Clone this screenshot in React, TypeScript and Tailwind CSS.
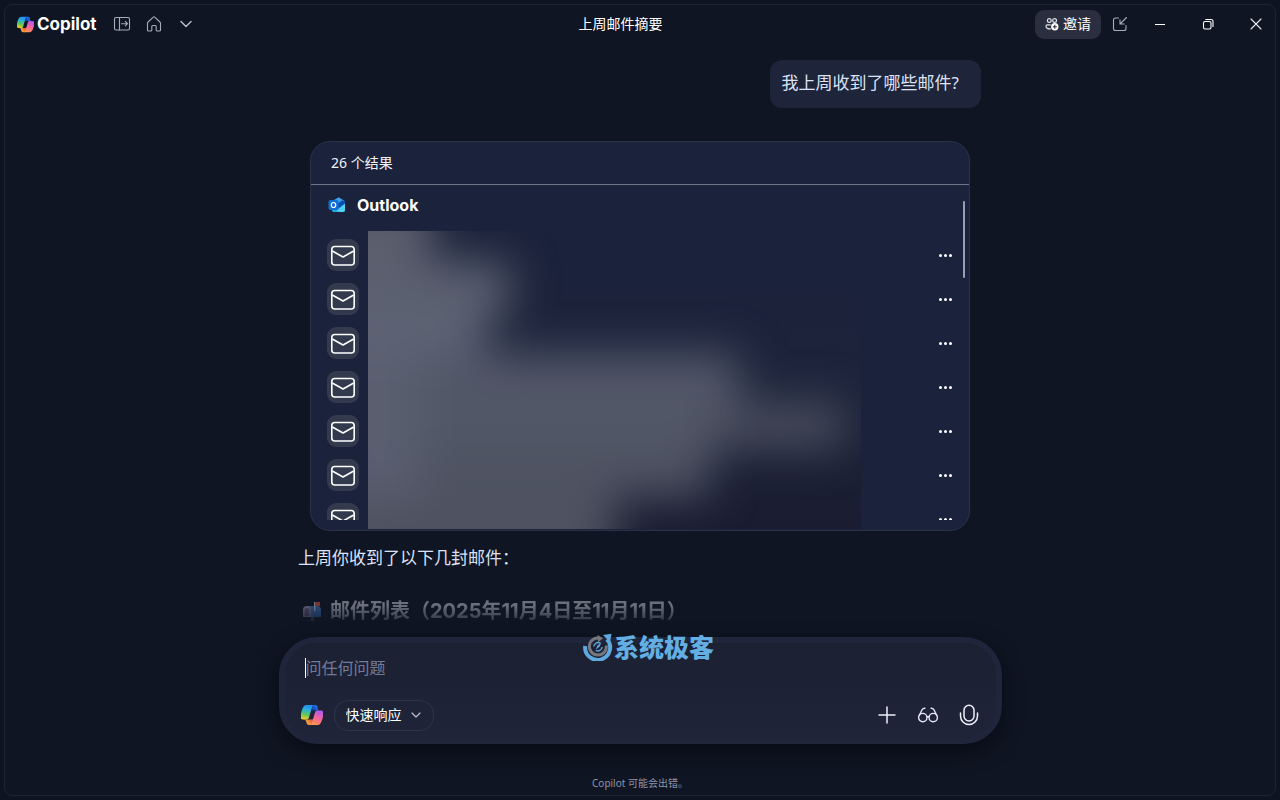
import { useId } from "react";
import type { ReactNode } from "react";

interface MailItem {
  id: number;
  label: string;
}

const MAILS: MailItem[] = Array.from({ length: 7 }, (_, i) => ({
  id: i,
  label: `邮件 ${i + 1}`,
}));

function CopilotLogo({ className }: { className: string }) {
  const id = useId();
  return (
    <svg viewBox="2 3 44 42" className={className} aria-hidden="true">
      <defs>
        <linearGradient id={`${id}a`} x1="23" y1="16" x2="34" y2="8" gradientUnits="userSpaceOnUse">
          <stop offset="0" stopColor="#12308f" />
          <stop offset="1" stopColor="#2270ec" />
        </linearGradient>
        <linearGradient id={`${id}b`} x1="14" y1="40" x2="25" y2="32" gradientUnits="userSpaceOnUse">
          <stop offset="0" stopColor="#f8a63c" />
          <stop offset="1" stopColor="#d8503c" />
        </linearGradient>
        <linearGradient id={`${id}c`} x1="17" y1="4" x2="11" y2="33" gradientUnits="userSpaceOnUse">
          <stop offset="0" stopColor="#1f8df2" />
          <stop offset="0.35" stopColor="#2fb0d8" />
          <stop offset="0.65" stopColor="#5cc45c" />
          <stop offset="1" stopColor="#f2d022" />
        </linearGradient>
        <linearGradient id={`${id}d`} x1="38" y1="15" x2="28" y2="44" gradientUnits="userSpaceOnUse">
          <stop offset="0" stopColor="#a65bee" />
          <stop offset="0.45" stopColor="#ee62a8" />
          <stop offset="0.8" stopColor="#fb7c6c" />
          <stop offset="1" stopColor="#fb9a4c" />
        </linearGradient>
      </defs>
      <path
        fill={`url(#${id}a)`}
        d="M35.142 7.325A4.63 4.63 0 0 0 30.7 4h-2.350a4.63 4.63 0 0 0-4.554 3.794L23 15.400c.8-.3 2-.4 3.500-.3h14.320h-.926a4.63 4.63 0 0 1-4.443-3.325Z"
      />
      <path
        fill={`url(#${id}b)`}
        d="M13.330 40.656A4.63 4.63 0 0 0 17.779 44h3.870a4.63 4.63 0 0 0 4.629-4.510l.1-7.500c-.8.700-2 .9-3.500.9H7.604a4.63 4.63 0 0 1 4.447 3.344Z"
      />
      <path
        fill={`url(#${id}c)`}
        transform="translate(-1 0)"
        d="M29.5 4H13.46c-4.583 0-7.332 6.057-9.165 12.113-2.172 7.176-5.014 16.775 3.208 16.775h6.925a4.63 4.63 0 0 0 4.459-3.358 2077.617 2077.617 0 0 1 4.971-17.156c.842-2.846 1.543-5.29 2.619-6.812C27.08 4.71 28.086 4 29.5 4Z"
      />
      <path
        fill={`url(#${id}d)`}
        transform="translate(1 0)"
        d="M18.498 44h16.04c4.582 0 7.332-6.058 9.165-12.115 2.171-7.177 5.013-16.775-3.208-16.775h-6.926a4.63 4.63 0 0 0-4.459 3.358 2084.96 2084.96 0 0 1-4.972 17.16c-.842 2.847-1.542 5.29-2.619 6.812-.603.853-1.61 1.56-3.021 1.56Z"
      />
    </svg>
  );
}

function OutlookLogo() {
  return (
    <svg viewBox="0 0 18 16" className="h-4 w-[18px]" aria-hidden="true">
      <path d="M4 4.500 10.500.500 17 4.500V13a2 2 0 0 1-2 2H6a2 2 0 0 1-2-2Z" fill="#1668c8" />
      <path d="M5 3.800 10 .8q.7-.4 1.400 0L16.500 4l-6 4Z" fill="#38a5ee" />
      <path d="M8 7.500 14.500 3.300 17 4.700v3L10 11Z" fill="#0c4fb0" />
      <path d="M17 6.500V13a2 2 0 0 1-2 2H6.500Z" fill="#4fd3f5" />
      <path d="M6 15a2 2 0 0 1-2-2v-1l8 3Z" fill="#2ba9ea" />
      <rect x="0.500" y="3" width="10" height="10" rx="2" fill="#126fd4" />
      <ellipse cx="5.500" cy="8" rx="2.200" ry="2.500" fill="none" stroke="#fff" strokeWidth="1.200" />
    </svg>
  );
}

function MailboxEmoji() {
  return (
    <svg viewBox="0 0 20 20" className="h-5 w-5" aria-hidden="true">
      <rect x="9" y="15" width="3" height="5" fill="#7a5a4e" />
      <path d="M5 5h10a4 4 0 0 1 4 4v7H5Z" fill="#3f7fd0" />
      <path d="M1 9a4 4 0 0 1 8 0v7H1Z" fill="#a49cc0" />
      <path d="M2.500 9.500a2.500 2.500 0 0 1 5 0V15h-5Z" fill="#6f6c8c" />
      <rect x="12" y="1" width="1.500" height="9" fill="#cdd3de" />
      <rect x="13" y="1" width="5" height="4" fill="#e0563c" />
    </svg>
  );
}

function MailIcon() {
  return (
    <svg viewBox="0 0 26 24" className="h-6 w-[26px]" fill="none" stroke="#fff" strokeWidth="1.600" strokeLinejoin="round">
      <rect x="1.800" y="3.500" width="22.400" height="18.500" rx="3" />
      <path d="M2.300 8 13 14l10.700-6" />
    </svg>
  );
}

function IconButton({ label, children }: { label: string; children: ReactNode }) {
  return (
    <button aria-label={label} className="flex h-8 w-8 shrink-0 items-center justify-center">
      {children}
    </button>
  );
}

function TitleBar() {
  return (
    <header className="grid h-[38px] shrink-0 grid-cols-[1fr_auto_1fr] items-center pl-3 pr-[3px]">
      <div className="flex items-center">
        <div className="flex w-[89px] items-center gap-[3px]">
          <CopilotLogo className="h-[17px] w-[17px]" />
          <span className="pb-px font-['Inter','Noto_Sans_CJK_SC',sans-serif] text-[17px] leading-5 font-bold text-white">
            Copilot
          </span>
        </div>
        <IconButton label="展开侧栏">
          <svg viewBox="0 0 18 16" className="h-4 w-[18px]" fill="none" stroke="#a6acb9" strokeWidth="1.100" strokeLinecap="round" strokeLinejoin="round">
            <rect x="1.500" y="1.500" width="15" height="12.500" rx="1.500" />
            <path d="M6.500 1.500V14M8.500 7.700h6M12.300 5.500l2.200 2.200-2.200 2.200" />
          </svg>
        </IconButton>
        <IconButton label="主页">
          <svg viewBox="0 0 16 16" className="h-4 w-4" fill="none" stroke="#a6acb9" strokeWidth="1.100" strokeLinejoin="round">
            <path d="M1.500 7.200c0-.5.200-.9.600-1.200L7.300 1.100a1 1 0 0 1 1.400 0L13.900 6c.4.300.6.700.6 1.200v6.800a1 1 0 0 1-1 1h-2.300a1 1 0 0 1-1-1V10.500a1 1 0 0 0-1-1H6.800a1 1 0 0 0-1 1V14a1 1 0 0 1-1 1H2.500a1 1 0 0 1-1-1Z" />
          </svg>
        </IconButton>
        <IconButton label="更多">
          <svg viewBox="0 0 12 8" className="h-2 w-3" fill="none" stroke="#b4b9c5" strokeWidth="1.500" strokeLinecap="round" strokeLinejoin="round">
            <path d="m1 1.500 5 5 5-5" />
          </svg>
        </IconButton>
      </div>

      <h1 className="mr-12 text-sm leading-5 text-white">上周邮件摘要</h1>

      <div className="flex items-center justify-end">
        <button className="mr-[3px] flex h-[29px] items-center gap-1 rounded-[9px] bg-[#2a2e3e] px-[10px] text-sm text-white">
          <svg viewBox="0 0 14 14" className="h-[14px] w-[14px]" fill="none" stroke="#dfe2ea" strokeWidth="1.200">
            <circle cx="4.300" cy="3.500" r="1.900" />
            <circle cx="9.600" cy="3.500" r="1.900" />
            <path d="M5.500 11.800C3 12.100 1 11.200 1 9.300c0-.9.500-1.400 1.300-1.400h3" strokeLinecap="round" />
            <circle cx="9.800" cy="9.800" r="3.700" fill="#fff" stroke="none" />
            <path d="M9.800 7.800v4M7.800 9.800h4" stroke="#2a2e3e" strokeWidth="1.100" />
          </svg>
          邀请
        </button>
        <IconButton label="切换到小窗口">
          <svg viewBox="0 0 16 16" className="h-4 w-4" fill="none" stroke="#a6acb9" strokeWidth="1.100" strokeLinecap="round" strokeLinejoin="round">
            <path d="M6.500 2H3.500a2 2 0 0 0-2 2v8.500a2 2 0 0 0 2 2h8.500a2 2 0 0 0 2-2V9.500M14.500 1.500 8 8M8 3.800V8h4.200" />
          </svg>
        </IconButton>
        <div className="ml-2 flex gap-4">
          <IconButton label="最小化">
            <span className="h-px w-[10px] bg-white" />
          </IconButton>
          <IconButton label="还原">
            <svg viewBox="0 0 12 12" className="h-3 w-3" fill="none" stroke="#fff" strokeWidth="1.100">
              <rect x="1.500" y="3.500" width="7.500" height="7.500" rx="1.500" />
              <path d="M3.800 1.500H9a2 2 0 0 1 2 2v5" strokeLinecap="round" />
            </svg>
          </IconButton>
          <IconButton label="关闭">
            <svg viewBox="0 0 12 12" className="h-3 w-3" fill="none" stroke="#e8eaf0" strokeWidth="1.100" strokeLinecap="round">
              <path d="m1 1 10 10M11 1 1 11" />
            </svg>
          </IconButton>
        </div>
      </div>
    </header>
  );
}

// Private subject lines, smeared out
function RedactedContent() {
  return (
    <div className="absolute top-[89px] right-[108px] bottom-px left-[57px] overflow-hidden bg-linear-to-b from-[#1b223b] via-[#1c233b] to-[#1a1d31]" aria-hidden="true">
      <div className="-mt-10 -ml-12 flex flex-col blur-[22px]">
        <div className="h-[70px] w-[112px] bg-[#5b5e6c]" />
        <div className="h-14 w-[190px] bg-[#5b6070]" />
        <div className="h-9 w-[165px] bg-[#5e6475]" />
        <div className="flex h-12">
          <div className="w-[100px] bg-[#5a5f70]" />
          <div className="w-[320px] bg-[#525768]" />
        </div>
        <div className="flex h-12">
          <div className="w-[100px] bg-[#5a5f70]" />
          <div className="w-[300px] bg-[#525767]" />
          <div className="w-[125px] bg-[#474c5b]" />
        </div>
        <div className="flex h-12">
          <div className="w-[100px] bg-[#595e70]" />
          <div className="w-[290px] bg-[#4e5362]" />
        </div>
        <div className="h-20 w-[295px] bg-[#4f5260]" />
      </div>
    </div>
  );
}

function ResultsCard() {
  return (
    <section className="relative mx-3 mt-[33px] overflow-hidden rounded-[20px] border border-[#2c3245] bg-[#1b223b] pb-[10px]">
      <div className="flex h-[43px] items-center border-b border-[#6f7688] px-5">
        <h2 className="text-sm leading-5 text-[#f0f2f8]">26 个结果</h2>
      </div>
      <div className="h-[335px] overflow-hidden">
        <div className="flex h-10 items-center gap-[11px] pl-[17px]">
          <OutlookLogo />
          <h3 className="font-['Inter','Noto_Sans_CJK_SC',sans-serif] text-base leading-6 font-bold text-white">Outlook</h3>
        </div>
        <ul className="mt-2">
          {MAILS.map((mail) => (
            <li key={mail.id} className="flex h-11 items-center justify-between pr-2 pl-4">
              <span className="flex h-8 w-8 items-center justify-center rounded-[9px] bg-[#343a4e]">
                <MailIcon />
              </span>
              <button aria-label={`${mail.label} 的更多选项`} className="flex h-8 w-8 items-center justify-center gap-[2px]">
                <span className="h-[3px] w-[3px] rounded-full bg-white" />
                <span className="h-[3px] w-[3px] rounded-full bg-white" />
                <span className="h-[3px] w-[3px] rounded-full bg-white" />
              </button>
            </li>
          ))}
        </ul>
      </div>
      <RedactedContent />
      <div className="absolute top-[59px] right-1 h-[77px] w-[2px] rounded-full bg-[#9a9faf]" />
    </section>
  );
}

function Watermark() {
  return (
    <div className="pointer-events-none absolute -top-1 left-1/2 ml-[-57px] flex items-center gap-px">
      <svg viewBox="0 0 30 28" className="h-7 w-[30px]" fill="none">
        <path d="M2.200 13a12.500 12.500 0 1 0 21.800-6.800" stroke="#5fa9de" strokeWidth="4" />
        <path d="m20 2 8.500-1.200-1.500 8.500Z" fill="#5fa9de" />
        <path d="M17.500 5.500a8.500 8.500 0 1 0 5.800 7" stroke="#77787f" strokeWidth="3" />
        <path d="m14.500 2 5.500 3.300-5 4Z" fill="#77787f" />
        <path d="M10.800 13.500a4.300 4.300 0 0 1 6.500-3.300M19.200 14a4.300 4.300 0 0 1-6.500 3.300" stroke="#5fa9de" strokeWidth="1.400" />
        <path d="m12.500 16.800 2-4.200 4-3-2 4.200Z" fill="#5fa9de" />
      </svg>
      <span className="text-[25px] leading-7 font-black text-[#63afe4]">系统极客</span>
    </div>
  );
}

function Composer() {
  return (
    <div className="relative mx-auto w-full max-w-[723px] shrink-0">
      <form className="rounded-[38px] border-[6px] border-[#1f253a] bg-linear-to-b from-[#1b2032] to-[#1f2439] pt-[13px] pr-[11px] pb-[7px] pl-5 shadow-[0_8px_20px_rgba(4,6,14,0.6)]">
        <label className="flex h-6 items-center">
          <span className="h-5 w-px bg-white" />
          <input
            type="text"
            aria-label="问任何问题"
            placeholder="问任何问题"
            className="w-full bg-transparent text-base leading-6 text-white outline-none placeholder:text-[#737a98]"
          />
        </label>
        <div className="mt-[19px] flex items-center justify-between">
          <div className="-ml-1 flex items-center gap-[11px]">
            <CopilotLogo className="h-[22px] w-[22px]" />
            <div className="relative">
              <select
                aria-label="响应模式"
                className="block h-[31px] w-[100px] appearance-none rounded-[14px] border border-[#2e3447] bg-transparent pl-[11px] text-sm text-white"
              >
                <option>快速响应</option>
              </select>
              <svg viewBox="0 0 10 6" className="pointer-events-none absolute top-3 right-[13px] h-[6px] w-[10px]" fill="none" stroke="#b9bfd0" strokeWidth="1.200" strokeLinecap="round" strokeLinejoin="round">
                <path d="m1 1 4 4 4-4" />
              </svg>
            </div>
          </div>
          <div className="flex items-center gap-[9px]">
            <IconButton label="添加">
              <svg viewBox="0 0 18 18" className="h-[18px] w-[18px]" fill="none" stroke="#eef0f8" strokeWidth="1.500" strokeLinecap="round">
                <path d="M9 1v16M1 9h16" />
              </svg>
            </IconButton>
            <IconButton label="视觉">
              <svg viewBox="0 0 22 16" className="h-4 w-[22px]" fill="none" stroke="#e4e8f6" strokeWidth="1.400" strokeLinecap="round">
                <circle cx="5.800" cy="10.600" r="4.200" />
                <circle cx="16.200" cy="10.600" r="4.200" />
                <path d="M9.900 9.900c.6-.5 1.600-.5 2.200 0M2.200 8.500 4.900 3c.6-1.100 1.500-1.700 3-1.700M19.800 8.500 17.100 3c-.6-1.100-1.500-1.700-3-1.700" />
              </svg>
            </IconButton>
            <IconButton label="语音">
              <svg viewBox="0 0 20 22" className="h-[22px] w-5" fill="none" stroke="#eef0f8" strokeWidth="1.500" strokeLinecap="round">
                <rect x="5" y="1.200" width="10" height="15.800" rx="5" />
                <path d="M1.500 9v3a8.500 8.500 0 0 0 17 0V9" />
              </svg>
            </IconButton>
          </div>
        </div>
      </form>
      <Watermark />
    </div>
  );
}

export default function App() {
  return (
    <div className="flex h-screen flex-col bg-[#0e1421] p-1 font-['Noto_Sans','Noto_Sans_CJK_SC',sans-serif]">
      <div className="flex min-h-0 flex-1 flex-col rounded-lg border border-[#1f2533] bg-[#0f1522]">
        <TitleBar />

        <main className="min-h-0 flex-1 overflow-hidden pt-[17px]">
          <div className="mx-auto flex w-full max-w-[684px] flex-col">
            <p className="mr-px flex h-12 items-center self-end rounded-xl bg-[#1e2439] pr-[22px] pb-0.5 pl-3 text-[17px] leading-6 text-[#dde2f6]">
              我上周收到了哪些邮件?
            </p>
            <ResultsCard />
            <p className="mt-[15px] text-[17px] leading-6 text-[#dde2f6]">上周你收到了以下几封邮件：</p>
            <div className="mt-[27px] flex h-7 items-center gap-2 pl-1 opacity-50 mask-b-from-30% mask-b-to-120%">
              <MailboxEmoji />
              <h2 className="font-['Inter','Noto_Sans_CJK_SC',sans-serif] text-xl font-bold text-[#c3c8d4]">
                邮件列表（2025年11月4日至11月11日）
              </h2>
            </div>
          </div>
        </main>

        <Composer />
        <footer className="flex h-[51px] shrink-0 items-end justify-center pb-1 text-[10px] leading-4 text-[#8d93ad]">
          Copilot 可能会出错。
        </footer>
      </div>
    </div>
  );
}
